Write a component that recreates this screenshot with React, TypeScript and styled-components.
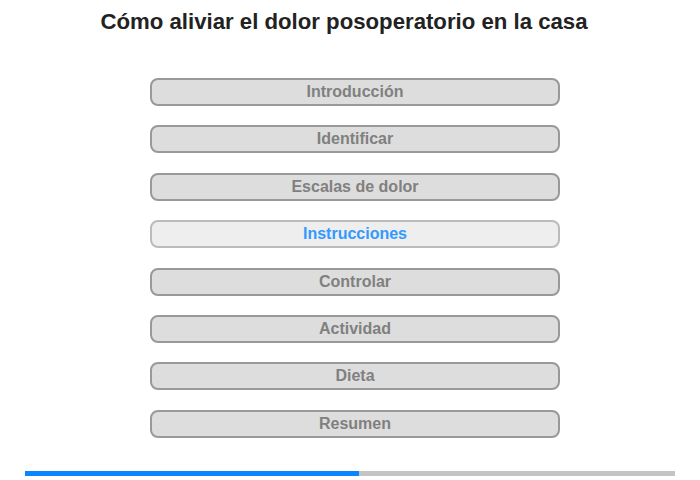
import styled, { createGlobalStyle } from "styled-components";

const GlobalStyle = createGlobalStyle`
  html, body {
    margin: 0;
    padding: 0;
    background: #ffffff;
  }
  body {
    font-family: "Liberation Sans", Arial, sans-serif;
  }
`;

const Page = styled.div`
  width: 700px;
  height: 480px;
  display: flex;
  flex-direction: column;
  align-items: center;
  box-sizing: border-box;
  padding-top: 9px;
`;

const Title = styled.h1`
  margin: 0 12px 0 0;
  font-size: 22.2px;
  line-height: 26px;
  font-weight: bold;
  color: #222222;
`;

const Menu = styled.nav`
  display: flex;
  flex-direction: column;
  gap: 19.4px;
  margin: 43px 0 0 10px;
`;

const MenuButton = styled.div<{ $active?: boolean }>`
  width: 410px;
  height: 28px;
  box-sizing: border-box;
  display: flex;
  align-items: center;
  justify-content: center;
  border: 2px solid ${(p) => (p.$active ? "#bbbbbb" : "#999999")};
  border-radius: 8px;
  background: ${(p) => (p.$active ? "#eeeeee" : "#dddddd")};
  color: ${(p) => (p.$active ? "#3399ff" : "#808080")};
  font-size: 16px;
  font-weight: bold;
`;

const Progress = styled.div`
  margin-top: auto;
  margin-bottom: 4px;
  width: 650px;
  height: 5px;
  background: #c4c4c4;
  display: flex;
`;

const ProgressFill = styled.div`
  height: 100%;
  background: #0a84ff;
`;

const items = [
  "Introducción",
  "Identificar",
  "Escalas de dolor",
  "Instrucciones",
  "Controlar",
  "Actividad",
  "Dieta",
  "Resumen",
];

export default function App() {
  const current = 3;
  return (
    <>
      <GlobalStyle />
      <Page>
        <Title>Cómo aliviar el dolor posoperatorio en la casa</Title>
        <Menu>
          {items.map((label, i) => (
            <MenuButton key={label} $active={i === current}>
              {label}
            </MenuButton>
          ))}
        </Menu>
        <Progress>
          <ProgressFill style={{ width: `${(334 / 650) * 100}%` }} />
        </Progress>
      </Page>
    </>
  );
}
